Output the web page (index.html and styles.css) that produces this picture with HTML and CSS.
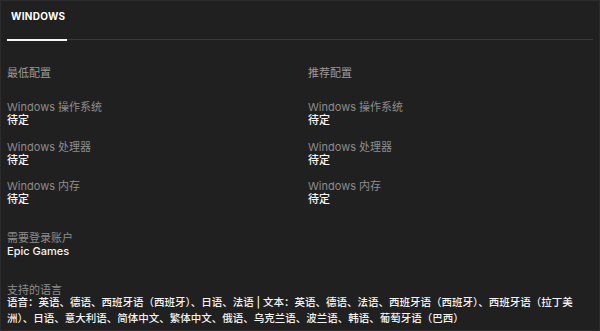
FILE: index.html
```html
<!DOCTYPE html>
<html>
	<head>
		<meta charset="UTF-8" />
		<meta name="viewport" content="width=device-width, initial-scale=1.0" />
		<title>Windows 系统需求</title>
		<link rel="stylesheet" href="styles.css">
	</head>

	<body>
		<div id="panel">
			<div class="tabs">
				<div class="tab active">WINDOWS</div>
			</div>

			<div class="specs">
				<div class="col">
					<p class="heading">最低配置</p>
					<div class="item">
						<div class="label">Windows 操作系统</div>
						<div class="value">待定</div>
					</div>
					<div class="item">
						<div class="label">Windows 处理器</div>
						<div class="value">待定</div>
					</div>
					<div class="item">
						<div class="label">Windows 内存</div>
						<div class="value">待定</div>
					</div>
				</div>

				<div class="col">
					<p class="heading">推荐配置</p>
					<div class="item">
						<div class="label">Windows 操作系统</div>
						<div class="value">待定</div>
					</div>
					<div class="item">
						<div class="label">Windows 处理器</div>
						<div class="value">待定</div>
					</div>
					<div class="item">
						<div class="label">Windows 内存</div>
						<div class="value">待定</div>
					</div>
				</div>
			</div>

			<div class="item account">
				<div class="label">需要登录账户</div>
				<div class="value">Epic Games</div>
			</div>

			<div class="item languages">
				<div class="label">支持的语言</div>
				<div class="value">语音：英语、德语、西班牙语（西班牙）、日语、法语 | 文本：英语、德语、法语、西班牙语（西班牙）、西班牙语（拉丁美洲）、日语、意大利语、简体中文、繁体中文、俄语、乌克兰语、波兰语、韩语、葡萄牙语（巴西）</div>
			</div>
		</div>
	</body>
</html>
```

FILE: styles.css
```css
html, body {
	width:100%; height:100%;
	margin:0px; padding:0px;
	background:#202020; color:#f2f2f2;
}

body {
	font-family: Inter, "Noto Sans CJK SC", sans-serif;
	font-size:11px;
}

#panel {
	box-sizing:border-box;
	height:331px;
	border:1px solid #2c2c2c;
	padding:0px 6px;
	overflow:hidden;
}

.tabs {
	border-bottom:1px solid #3a3a3a;
	height:38px;
	display:flex;
}

.tab {
	font-size:10px;
	font-weight:700;
	letter-spacing:0.3px;
	padding:9px 4px 0px 4px;
	width:60px;
	color:#ffffff;
}
.tab.active { border-bottom:2px solid #f5f5f5; margin-bottom:-1px; box-sizing:border-box; height:40px }

.specs { display:grid; grid-template-columns:301px 1fr; }

p { margin:0px; }

.heading {
	color:#9a9a9a;
	margin-top:27px;
	margin-bottom:21px;
	line-height:13px;
}

.item  { margin-bottom:13.5px; line-height:13px; }
.label { color:#8c8c8c; }
.value { color:#f4f4f4; font-weight:500; }

.account   { margin-top:12px; }
.languages { margin-top:26px; }
.languages .value { line-height:16px; font-size:10.5px; margin-top:-2px; }
```
